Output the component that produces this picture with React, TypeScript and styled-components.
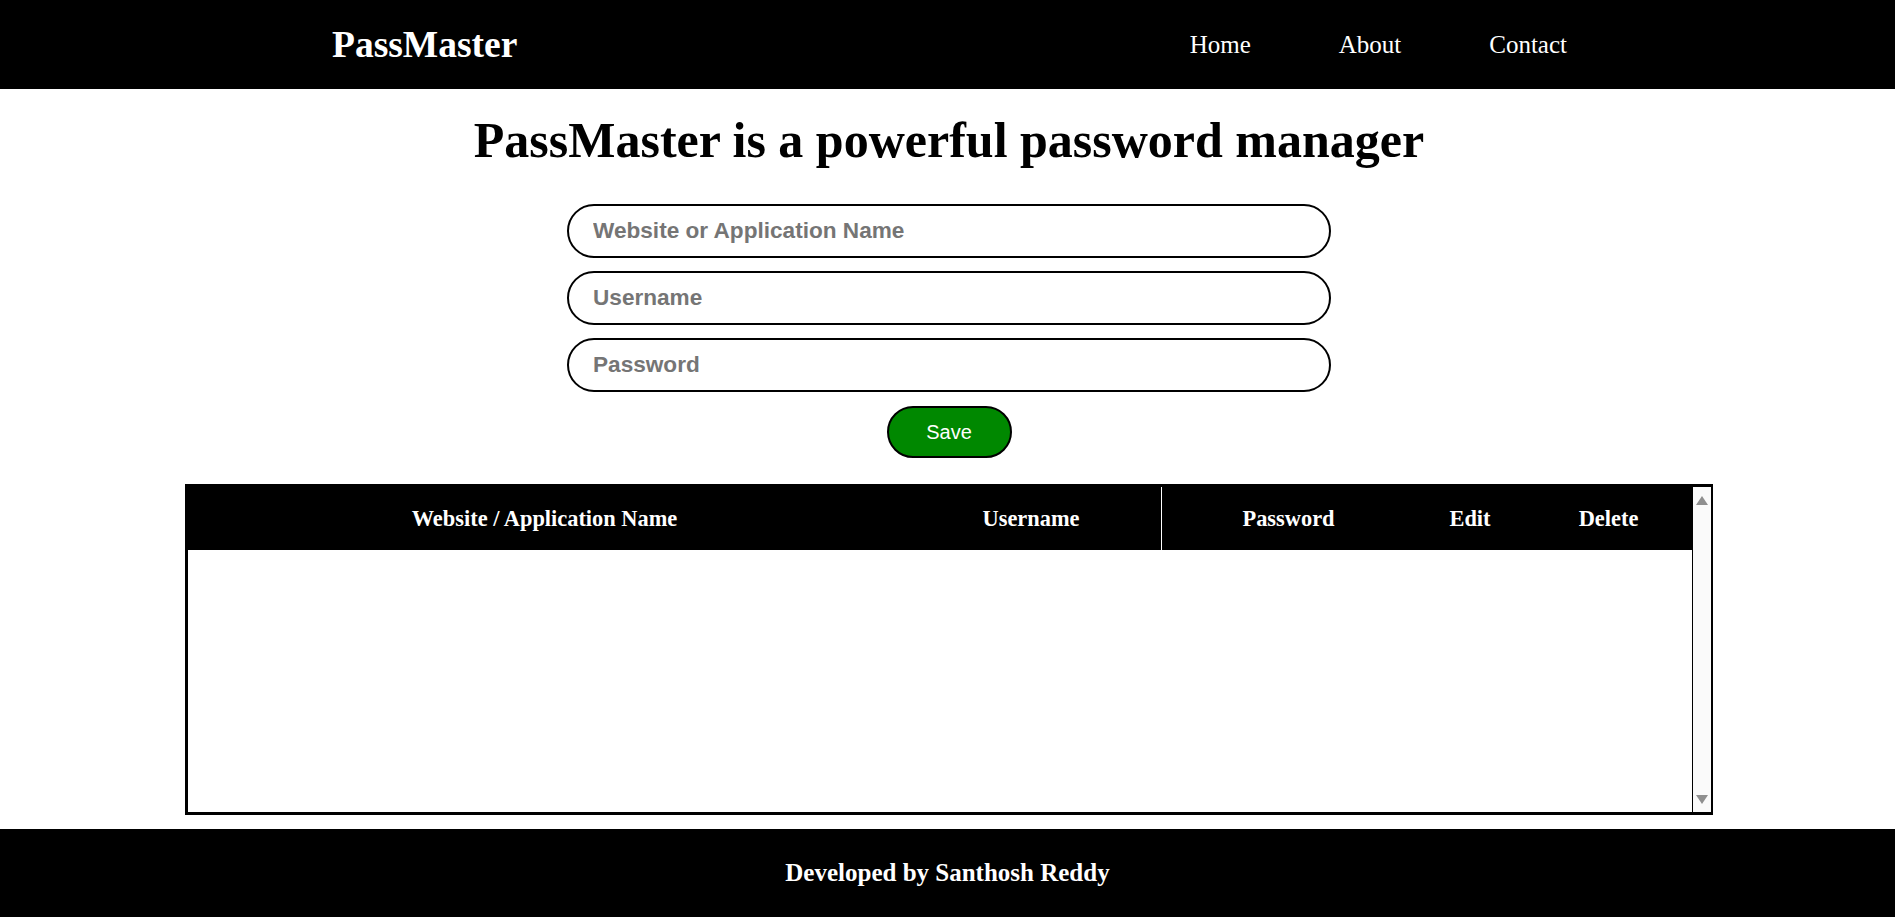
import React, { FC } from "react";
import styled, { createGlobalStyle } from "styled-components";

const GlobalStyle = createGlobalStyle`
  * {
    box-sizing: border-box;
  }
  body {
    margin: 0;
    background: #fff;
    font-family: "Liberation Serif", "Times New Roman", serif;
  }
`;

const Page = styled.div`
  display: flex;
  flex-direction: column;
  min-height: 100vh;
`;

const Nav = styled.nav`
  height: 89px;
  background: #000;
  color: #fff;
  display: flex;
  align-items: center;
  justify-content: space-between;
  padding: 0 328px 0 332px;
`;

const Logo = styled.div`
  font-size: 37.5px;
  font-weight: bold;
`;

const NavLinks = styled.ul`
  display: flex;
  gap: 88px;
  list-style: none;
  margin: 0;
  padding: 0;
`;

const NavLink = styled.li`
  font-size: 25px;
`;

const Main = styled.main`
  flex: 1;
  display: flex;
  flex-direction: column;
  align-items: center;
  padding-left: 3px;
`;

const Title = styled.h1`
  font-size: 50px;
  line-height: 55px;
  font-weight: bold;
  margin: 24px 0 36px;
`;

const Form = styled.form`
  display: flex;
  flex-direction: column;
  align-items: center;
  gap: 13px;
`;

const Input = styled.input`
  width: 764px;
  height: 54px;
  border: 2px solid #000;
  border-radius: 27px;
  padding: 0 24px;
  font-family: "Liberation Sans", Arial, sans-serif;
  font-size: 22.6px;
  font-weight: bold;
  outline: none;
  &::placeholder {
    color: #757575;
  }
`;

const SaveButton = styled.button`
  width: 125px;
  height: 52px;
  margin-top: 1px;
  background: #008800;
  color: #fff;
  border: 2px solid #000;
  border-radius: 26px;
  font-family: "Liberation Sans", Arial, sans-serif;
  font-size: 20px;
`;

const TableBox = styled.div`
  margin-top: 26px;
  width: 1528px;
  height: 331px;
  border: 3px solid #000;
  border-right-width: 2px;
  display: flex;
`;

const TableArea = styled.div`
  flex: 1;
  display: flex;
  flex-direction: column;
  border-right: 1px solid #000;
`;

const HeaderRow = styled.div`
  height: 63px;
  background: #000;
  display: grid;
  grid-template-columns: 713px 260px 254px 110px 1fr;
`;

const HeaderCell = styled.div<{ $divider?: boolean }>`
  display: flex;
  align-items: center;
  justify-content: center;
  color: #fff;
  font-size: 22.4px;
  font-weight: bold;
  border-left: ${(p) => (p.$divider ? "1px solid #fff" : "none")};
`;

const Body = styled.div`
  flex: 1;
  background: #fff;
`;

const ScrollTrack = styled.div`
  width: 18px;
  background: #fafafa;
  display: flex;
  flex-direction: column;
  justify-content: space-between;
  align-items: center;
  padding: 9px 0 8px;
`;

const Footer = styled.footer`
  margin-top: 14px;
  height: 88px;
  background: #000;
  color: #fff;
  display: flex;
  align-items: center;
  justify-content: center;
  font-size: 25px;
  font-weight: bold;
`;

const Arrow: FC<{ down?: boolean }> = ({ down }) => (
  <svg width="12" height="9" viewBox="0 0 12 9">
    <polygon
      points={down ? "0,0 12,0 6,9" : "6,0 12,9 0,9"}
      fill="#8f8f8f"
    />
  </svg>
);

const columns = [
  "Website / Application Name",
  "Username",
  "Password",
  "Edit",
  "Delete",
];

const App: FC = () => {
  return (
    <Page>
      <GlobalStyle />
      <Nav>
        <Logo>PassMaster</Logo>
        <NavLinks>
          <NavLink>Home</NavLink>
          <NavLink>About</NavLink>
          <NavLink>Contact</NavLink>
        </NavLinks>
      </Nav>
      <Main>
        <Title>PassMaster is a powerful password manager</Title>
        <Form onSubmit={(e) => e.preventDefault()}>
          <Input placeholder="Website or Application Name" />
          <Input placeholder="Username" />
          <Input placeholder="Password" />
          <SaveButton type="submit">Save</SaveButton>
        </Form>
        <TableBox>
          <TableArea>
            <HeaderRow>
              {columns.map((c, i) => (
                <HeaderCell key={c} $divider={i === 2}>
                  {c}
                </HeaderCell>
              ))}
            </HeaderRow>
            <Body />
          </TableArea>
          <ScrollTrack>
            <Arrow />
            <Arrow down />
          </ScrollTrack>
        </TableBox>
      </Main>
      <Footer>Developed by Santhosh Reddy</Footer>
    </Page>
  );
};

export default App;
